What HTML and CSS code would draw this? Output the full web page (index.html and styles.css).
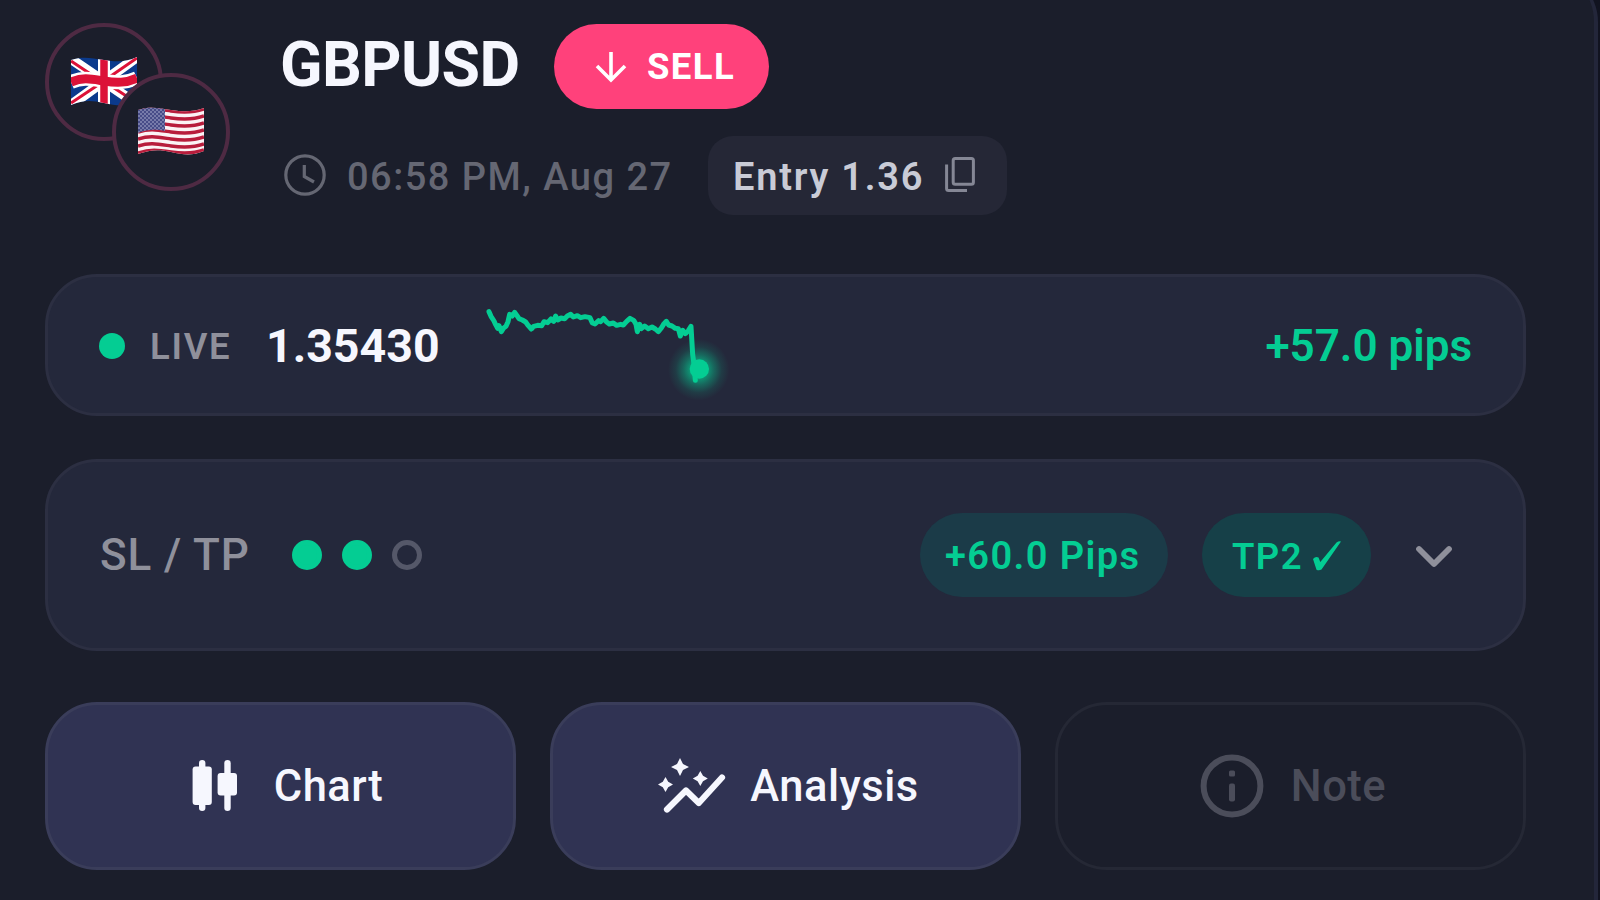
FILE: index.html
```html
<!DOCTYPE html>
<html lang="en">

<head>
    <meta charset="UTF-8">
    <meta name="viewport" content="width=device-width, initial-scale=1.0">
    <title>GBPUSD Signal</title>
    <link rel="stylesheet" href="styles.css">
</head>

<body>
    <div class="panel">
        <div class="header">
            <div class="pair-flags">
                <div class="flag">
                    <svg width="66" height="50" viewBox="0 0 66 50">
                        <defs>
                            <clipPath id="ukWave">
                                <path d="M0 3 C12 -1 20 1 33 3 C46 5 55 5 66 0 V45 C54 50 46 49 33 46 C20 43 12 43 0 48 Z" />
                            </clipPath>
                        </defs>
                        <g clip-path="url(#ukWave)">
                            <rect width="66" height="50" fill="#0b3a8c" />
                            <path d="M0 2 L66 47 M66 0 L0 48" stroke="#fff" stroke-width="10" />
                            <path d="M0 4 L30 24 M66 1 L37 21 M0 46 L30 26 M66 46 L37 27" stroke="#dc1238" stroke-width="3" />
                            <path d="M33 0 V50" stroke="#fff" stroke-width="12" />
                            <path d="M0 25 C12 20 20 22 33 24 C46 26 55 26 66 21" fill="none" stroke="#fff" stroke-width="14" />
                            <path d="M33 0 V50" stroke="#dc1238" stroke-width="7.5" />
                            <path d="M0 25 C12 20 20 22 33 24 C46 26 55 26 66 21" fill="none" stroke="#dc1238" stroke-width="9" />
                        </g>
                    </svg>
                </div>
                <div class="flag flag-front">
                    <svg width="66" height="50" viewBox="0 0 66 50">
                        <defs>
                            <clipPath id="usWave">
                                <path d="M0 3 C12 -1 20 1 33 3 C46 5 55 5 66 1 V44 C54 49 46 48 33 45 C20 42 12 43 0 47 Z" />
                            </clipPath>
                            <pattern id="stars" width="4" height="4" patternUnits="userSpaceOnUse">
                                <rect width="4" height="4" fill="#474c88" />
                                <circle cx="1" cy="1" r=".8" fill="#b4b7d6" />
                                <circle cx="3" cy="3" r=".8" fill="#b4b7d6" />
                            </pattern>
                        </defs>
                        <g clip-path="url(#usWave)">
                            <rect width="66" height="50" fill="#fbf3f5" />
                            <g fill="none" stroke="#b81d3c" stroke-width="3.5">
                                <path d="M0 4 C12 0 20 2 33 4 C46 6 55 6 66 2" />
                                <path d="M0 11 C12 7 20 9 33 11 C46 13 55 13 66 9" />
                                <path d="M0 18 C12 14 20 16 33 18 C46 20 55 20 66 16" />
                                <path d="M0 25 C12 21 20 23 33 25 C46 27 55 27 66 23" />
                                <path d="M0 32 C12 28 20 30 33 32 C46 34 55 34 66 30" />
                                <path d="M0 39 C12 35 20 37 33 39 C46 41 55 41 66 37" />
                                <path d="M0 46 C12 42 20 43 33 45 C46 47 55 47 66 43" />
                            </g>
                            <path d="M0 0 H27 V24 C18 22 10 22 0 26 Z" fill="url(#stars)" />
                        </g>
                    </svg>
                </div>
            </div>

            <div class="info">
                <div class="title-row">
                    <h1 class="symbol">GBPUSD</h1>
                    <div class="side">
                        <svg width="32" height="32" viewBox="0 0 32 32" fill="none" stroke="#fff" stroke-width="3.6">
                            <path d="M16 1 V29 M2 15 L16 29 L30 15" />
                        </svg>
                        <span>SELL</span>
                    </div>
                </div>
                <div class="meta-row">
                    <svg class="clock" width="42" height="42" viewBox="0 0 42 42" fill="none" stroke="#656773" stroke-width="3.2">
                        <circle cx="21" cy="21" r="19.2" />
                        <path d="M20.3 11 V22.5 L30 28" />
                    </svg>
                    <span class="time">06:58 PM, Aug 27</span>
                    <div class="entry">
                        <span>Entry 1.36</span>
                        <svg width="30" height="36" viewBox="0 0 30 36" fill="none" stroke="#858795" stroke-width="3">
                            <rect x="8.2" y="1.6" width="20.2" height="25.6" rx="2" />
                            <path d="M1.6 7.5 V31.5 Q1.6 33.6 3.7 33.6 H22" />
                        </svg>
                    </div>
                </div>
            </div>
        </div>

        <div class="card live">
            <span class="live-dot"></span>
            <span class="live-label">LIVE</span>
            <span class="price">1.35430</span>
            <svg class="sparkline" width="270" height="120" viewBox="0 -15 810 360">
                <defs>
                    <radialGradient id="glow">
                        <stop offset="0.25" stop-color="#04cd93" stop-opacity=".7" />
                        <stop offset="0.5" stop-color="#04cd93" stop-opacity=".38" />
                        <stop offset="0.75" stop-color="#04cd93" stop-opacity=".12" />
                        <stop offset="1" stop-color="#04cd93" stop-opacity="0" />
                    </radialGradient>
                </defs>
                <circle cx="686" cy="236" r="92" fill="url(#glow)" />
                <path d="M57 62 L63 76 L72 90 L77 101 L83 112 L87 104 L94 122 L101 111 L108 106 L114 92 L119 70 L127 75 L134 64 L141 74 L147 83 L157 87 L167 93 L175 104 L184 114 L191 106 L203 103 L215 104 L222 92 L233 95 L243 84 L251 91 L257 75 L263 87 L273 81 L284 83 L292 75 L302 70 L310 78 L322 74 L332 80 L345 77 L360 80 L367 96 L375 99 L386 89 L392 92 L401 82 L409 92 L418 99 L430 96 L440 103 L452 100 L460 102 L470 91 L480 82 L491 88 L498 100 L502 122 L509 100 L514 113 L524 105 L535 113 L546 108 L556 114 L565 122 L574 111 L582 98 L589 91 L596 102 L606 105 L616 112 L625 113 L631 135 L638 118 L646 128 L655 119 L663 106 L668 190 L672 220 L676 268" fill="none" stroke="#04cd93" stroke-width="15" stroke-linejoin="round" stroke-linecap="round" />
                <circle cx="688" cy="234" r="29" fill="#04cd93" />
            </svg>
            <span class="pips">+57.0 pips</span>
        </div>

        <div class="card targets">
            <span class="targets-label">SL / TP</span>
            <div class="steps">
                <span class="step hit"></span>
                <span class="step hit"></span>
                <span class="step"></span>
            </div>
            <div class="chip chip-pips">+60.0 Pips</div>
            <div class="chip chip-tp">
                <span>TP2</span>
                <svg width="30" height="32" viewBox="0 0 30 32" fill="#04cd93">
                    <path d="M1 19 Q3.5 16 6.5 17.5 L8.3 22 L24.5 2.5 Q27 .8 29 1.5 L9.5 29.5 Q7 31 4.5 29.8 Z" />
                </svg>
            </div>
            <svg class="chevron" width="38" height="26" viewBox="0 0 38 26" fill="none" stroke="#8f909b" stroke-width="5.8" stroke-linecap="round" stroke-linejoin="round">
                <path d="M4 5 L19 20 L34 5" />
            </svg>
        </div>

        <div class="actions">
            <button class="action chart">
                <svg width="46" height="52" viewBox="0 0 46 52" fill="#f6f7fe">
                    <rect x="7" y="0" width="6.4" height="51" rx="3.2" />
                    <rect x="0.6" y="6.5" width="19.2" height="38.5" rx="3" />
                    <rect x="32.3" y="0" width="6.4" height="51" rx="3.2" />
                    <rect x="25.6" y="13" width="19.4" height="22.5" rx="3" />
                </svg>
                <span>Chart</span>
            </button>
            <button class="action analysis">
                <svg width="68" height="56" viewBox="0 0 68 56" fill="#f6f7fe">
                    <path d="M22 0 L25 6 L31 9 L25 12 L22 18 L19 12 L13 9 L19 6 Z" />
                    <path d="M42.3 13 L45 17.8 L49.8 20.5 L45 23.2 L42.3 28 L39.6 23.2 L34.8 20.5 L39.6 17.8 Z" />
                    <path d="M7.5 19 L10.2 23.8 L15 26.5 L10.2 29.2 L7.5 34 L4.8 29.2 L0 26.5 L4.8 23.8 Z" />
                    <path d="M9 51.5 L28 32.5 L40.8 45 L64 19.5" fill="none" stroke="#f6f7fe" stroke-width="6.2" stroke-linecap="round" stroke-linejoin="round" />
                </svg>
                <span>Analysis</span>
            </button>
            <button class="action note">
                <svg width="64" height="64" viewBox="0 0 64 64">
                    <circle cx="32" cy="32" r="28.4" fill="none" stroke="#4b4d5a" stroke-width="6" />
                    <rect x="29" y="16.5" width="6" height="6" rx="1.5" fill="#4b4d5a" />
                    <rect x="29" y="29.5" width="6" height="18" rx="2" fill="#4b4d5a" />
                </svg>
                <span>Note</span>
            </button>
        </div>
    </div>
</body>

</html>
```
FILE: styles.css
```css
* {
    box-sizing: border-box;
}

body {
    margin: 0;
    height: 900px;
    overflow: hidden;
    background-color: #111320;
    font-family: Roboto, "Liberation Sans", sans-serif;
}

/* the top edge of the panel is scrolled out of view */
.panel {
    width: 1598px;
    height: 930px;
    margin-top: -30px;
    padding: 53px 68px 0 45px;
    background-color: #1b1e2b;
    border-right: 4px solid #23263a;
    border-top-right-radius: 52px;
}

.header {
    display: flex;
    height: 251px;
}

.pair-flags {
    width: 187px;
    margin-right: 48px;
}

.flag {
    display: flex;
    align-items: center;
    justify-content: center;
    width: 118px;
    height: 118px;
    border: 4px solid #4e2a43;
    border-radius: 50%;
    background-color: #1b1e2b;
}

/* second flag overlaps the first */
.flag-front {
    position: relative;
    margin: -68px 0 0 67px;
}

.title-row {
    display: flex;
    align-items: center;
    height: 85px;
    margin-top: 1px;
}

.symbol {
    width: 274px;
    margin: -3px 0 0;
    font-size: 62.5px;
    line-height: 1;
    font-weight: 700;
    letter-spacing: -0.6px;
    color: #f6f7fe;
}

.side {
    display: flex;
    align-items: center;
    width: 215px;
    height: 85px;
    padding-left: 41px;
    border-radius: 43px;
    background-color: #ff417b;
    color: #fff;
    font-size: 36.5px;
    font-weight: 700;
    letter-spacing: 1.4px;
}

.side span {
    margin-left: 20px;
}

.meta-row {
    display: flex;
    align-items: center;
    height: 80px;
    margin-top: 26px;
    font-size: 38px;
    white-space: nowrap;
}

.clock {
    margin-left: 4px;
}

.time {
    width: 361px;
    margin: 4px 0 0 21px;
    color: #656773;
    font-weight: 500;
    letter-spacing: 1.5px;
}

.entry {
    display: flex;
    align-items: center;
    width: 299px;
    height: 79px;
    padding-left: 25px;
    border-radius: 25px;
    background-color: #252736;
    color: #c9cbd6;
    font-weight: 600;
    letter-spacing: 1.75px;
}

.entry span {
    width: 212px;
    margin-top: 4px;
}

.card {
    display: flex;
    align-items: center;
    border: 3px solid #2c2f42;
    border-radius: 52px;
    background-color: #24283b;
}

.live {
    height: 142px;
    padding: 1px 51px 0;
}

.live-dot {
    width: 26px;
    height: 26px;
    border-radius: 50%;
    background-color: #04cd93;
}

.live-label {
    width: 116px;
    margin: 1px 0 0 25px;
    color: #8f909b;
    font-size: 36.5px;
    font-weight: 600;
    letter-spacing: 1.7px;
}

.price {
    width: 204px;
    color: #f6f7fe;
    font-size: 46.5px;
    font-weight: 700;
}

.pips {
    margin-left: auto;
    color: #04cd93;
    font-size: 44px;
    font-weight: 600;
}

.targets {
    height: 192px;
    margin-top: 43px;
    padding: 0 70px 0 52px;
}

.targets-label {
    width: 192px;
    color: #8f909b;
    font-size: 44px;
    font-weight: 500;
    letter-spacing: 0.9px;
}

.steps {
    display: flex;
    gap: 20px;
}

.step {
    width: 30px;
    height: 30px;
    border: 5px solid #555869;
    border-radius: 50%;
}

.step.hit {
    border-color: #04cd93;
    background-color: #04cd93;
}

.chip {
    display: flex;
    align-items: center;
    height: 84px;
    padding-top: 2px;
    border-radius: 42px;
    color: #04cd93;
    font-weight: 600;
    letter-spacing: 1.4px;
}

.chip-pips {
    width: 248px;
    margin-left: auto;
    padding-left: 25px;
    background-color: #1b3b48;
    font-size: 38px;
}

.chip-tp {
    width: 169px;
    margin: 0 44px 0 34px;
    padding-left: 30px;
    background-color: #164048;
    font-size: 36.5px;
}

.chip-tp svg {
    margin-left: 9px;
}

.chevron {
    margin-top: 3px;
}

.actions {
    display: grid;
    grid-template-columns: repeat(3, 1fr);
    gap: 34px;
    margin-top: 51px;
}

.action {
    display: flex;
    align-items: center;
    justify-content: center;
    height: 168px;
    border: 3px solid #3a3d5a;
    border-radius: 52px;
    background-color: #303353;
    color: #f6f7fe;
    font-family: inherit;
    font-size: 43.5px;
    font-weight: 500;
    letter-spacing: 0.5px;
}

.chart {
    gap: 36px;
    padding-left: 20px;
}

.analysis {
    gap: 24px;
    padding-left: 12px;
}

.note {
    gap: 27px;
    padding-left: 11px;
    border-color: #252835;
    background-color: transparent;
    color: #4b4d5a;
}
```
